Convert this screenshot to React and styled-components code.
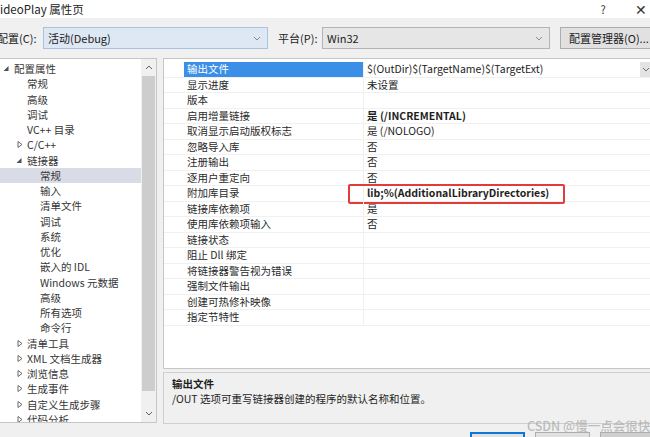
import styled, { createGlobalStyle } from "styled-components";

const GlobalStyle = createGlobalStyle`
  html, body {
    margin: 0;
    padding: 0;
    background: #f0f0f0;
    overflow: hidden;
  }
  body {
    font-family: "Noto Sans CJK SC", "Noto Sans", sans-serif;
    font-size: 10.5px;
    color: #1e1e1e;
  }
`;

const Window = styled.div`
  position: relative;
  width: 660px;
  height: 437px;
  overflow: hidden;
  display: flex;
  flex-direction: column;
  background: #f0f0f0;
`;

const TitleBar = styled.div`
  height: 18px;
  flex-shrink: 0;
  background: #fff;
  display: flex;
  align-items: center;
  font-size: 11.5px;
  color: #222;
`;

const Title = styled.span`
  flex: 1;
`;

const TitleButton = styled.span`
  width: 38px;
  text-align: center;
  font-size: ${p => (p.$big ? "14px" : "11px")};
  color: #333;
`;

const ConfigRow = styled.div`
  height: 40px;
  flex-shrink: 0;
  display: flex;
  align-items: center;
  font-size: 11px;
  color: #222;
`;

const Label = styled.span`
  width: ${p => p.$w}px;
  margin-left: ${p => p.$ml}px;
  flex-shrink: 0;
`;

const Select = styled.div`
  box-sizing: border-box;
  width: ${p => p.$w}px;
  height: 22px;
  flex-shrink: 0;
  display: flex;
  align-items: center;
  justify-content: space-between;
  padding: 0 6px 0 4px;
  background: ${p => (p.$focused ? "#dde8f4" : "#e6e6e6")};
  border: 1px solid ${p => (p.$focused ? "#a9c3de" : "#b4b4b4")};
`;

const Button = styled.div`
  box-sizing: border-box;
  width: 100px;
  height: 22px;
  flex-shrink: 0;
  margin-left: 10px;
  display: flex;
  align-items: center;
  padding-left: 8px;
  background: #e1e1e1;
  border: 1px solid #adadad;
`;

const Main = styled.div`
  height: 366px;
  flex-shrink: 0;
  display: flex;
  gap: 6px;
  padding-right: 8px;
`;

const Tree = styled.div`
  box-sizing: border-box;
  width: 158px;
  height: 365px;
  margin-left: -1px;
  display: flex;
  background: #fff;
  border: 1px solid #c6c6c6;
`;

const TreeList = styled.div`
  flex: 1;
  padding-top: 2px;
  overflow: hidden;
  color: #363636;
`;

const TreeRow = styled.div`
  height: 15.25px;
  line-height: 15.25px;
  display: flex;
  align-items: center;
  padding-left: ${p => p.$level * 13 + 1}px;
  background: ${p => (p.$selected ? "#d9dce6" : "transparent")};
  white-space: nowrap;
`;

const ArrowBox = styled.svg`
  width: 13px;
  height: 15px;
  flex-shrink: 0;
`;

const Scrollbar = styled.div`
  width: 15px;
  display: flex;
  flex-direction: column;
  background: #f0f0f0;
`;

const ScrollArrow = styled.div`
  height: 17px;
  display: flex;
  align-items: center;
  justify-content: center;
`;

const ScrollThumb = styled.div`
  height: 315px;
  margin: 0 1px;
  background: #cdcdcd;
`;

const ScrollTrack = styled.div`
  flex: 1;
  display: flex;
  flex-direction: column;
  justify-content: space-between;
`;

const RightColumn = styled.div`
  flex: 1;
  display: flex;
  flex-direction: column;
  gap: 3px;
`;

const Grid = styled.div`
  box-sizing: border-box;
  height: 311px;
  padding-top: 3px;
  background: #fff;
  border: 1px solid #c6c6c6;
`;

const GridRow = styled.div`
  box-sizing: border-box;
  height: 15.5px;
  display: grid;
  grid-template-columns: 20px 179px 1fr;
  border-bottom: 1px solid #f0f0f0;
  line-height: 14.5px;
`;

const NameCell = styled.div`
  padding-left: 3px;
  white-space: nowrap;
  background: ${p => (p.$selected ? "#3b8fe6" : "transparent")};
  color: ${p => (p.$selected ? "#fff" : "#2a2a2a")};
`;

const ValueCell = styled.div`
  position: relative;
  display: flex;
  padding-left: 3px;
  border-left: 1px solid #f0f0f0;
  white-space: nowrap;
  font-weight: ${p => (p.$bold ? 700 : 400)};
  color: #1e1e1e;
`;

const ValueText = styled.span`
  flex: 1;
`;

const DropButton = styled.div`
  width: 11px;
  display: flex;
  align-items: center;
  justify-content: center;
  background: #e3e3e3;
`;

const Highlight = styled.div`
  position: absolute;
  box-sizing: border-box;
  left: -16px;
  top: -2px;
  width: 217px;
  height: 20px;
  border: 2px solid #e23b3b;
  border-radius: 2px;
`;

const Description = styled.div`
  box-sizing: border-box;
  height: 52px;
  padding: 3px 8px;
  line-height: 15px;
  background: #f0f0f0;
  border: 1px solid #cfcfcf;
  color: #1e1e1e;
`;

const DescTitle = styled.div`
  font-weight: 700;
`;

const Footer = styled.div`
  display: flex;
  justify-content: flex-end;
  gap: 10px;
  padding-top: 8px;
`;

const FooterButton = styled.div`
  box-sizing: border-box;
  width: ${p => p.$w}px;
  height: 22px;
  background: ${p => (p.$dark ? "#cfcfcf" : "#e1e1e1")};
  border: ${p => (p.$primary ? "2px solid #0a78d4" : "1px solid #adadad")};
`;

const Watermark = styled.div`
  position: absolute;
  left: 527px;
  top: 416px;
  font-size: 12.5px;
  font-weight: 500;
  color: rgba(170, 170, 170, 0.75);
  white-space: nowrap;
`;

function Chevron({ up, color = "#8a8a8a" }) {
  return (
    <svg width="8" height="5" viewBox="0 0 8 5">
      <path
        d={up ? "M1 4 L4 1 L7 4" : "M1 1 L4 4 L7 1"}
        fill="none"
        stroke={color}
        strokeWidth="1"
      />
    </svg>
  );
}

function Arrow({ expanded }) {
  return (
    <ArrowBox viewBox="0 0 13 15">
      {expanded ? (
        <polygon points="7.5,5 7.5,10 2.5,10" fill="#505050" />
      ) : (
        <polygon points="4,4.5 8,7.5 4,10.5" fill="none" stroke="#6a6a6a" strokeWidth="1" />
      )}
    </ArrowBox>
  );
}

const treeItems = [
  { text: "配置属性", level: 0, arrow: "open" },
  { text: "常规", level: 1 },
  { text: "高级", level: 1 },
  { text: "调试", level: 1 },
  { text: "VC++ 目录", level: 1 },
  { text: "C/C++", level: 0, arrow: "closed", sub: true },
  { text: "链接器", level: 0, arrow: "open", sub: true },
  { text: "常规", level: 2, selected: true },
  { text: "输入", level: 2 },
  { text: "清单文件", level: 2 },
  { text: "调试", level: 2 },
  { text: "系统", level: 2 },
  { text: "优化", level: 2 },
  { text: "嵌入的 IDL", level: 2 },
  { text: "Windows 元数据", level: 2 },
  { text: "高级", level: 2 },
  { text: "所有选项", level: 2 },
  { text: "命令行", level: 2 },
  { text: "清单工具", level: 0, arrow: "closed", sub: true },
  { text: "XML 文档生成器", level: 0, arrow: "closed", sub: true },
  { text: "浏览信息", level: 0, arrow: "closed", sub: true },
  { text: "生成事件", level: 0, arrow: "closed", sub: true },
  { text: "自定义生成步骤", level: 0, arrow: "closed", sub: true },
  { text: "代码分析", level: 0, arrow: "closed", sub: true },
];

const props = [
  { name: "输出文件", value: "$(OutDir)$(TargetName)$(TargetExt)", selected: true },
  { name: "显示进度", value: "未设置" },
  { name: "版本", value: "" },
  { name: "启用增量链接", value: "是 (/INCREMENTAL)", bold: true },
  { name: "取消显示启动版权标志", value: "是 (/NOLOGO)" },
  { name: "忽略导入库", value: "否" },
  { name: "注册输出", value: "否" },
  { name: "逐用户重定向", value: "否" },
  { name: "附加库目录", value: "lib;%(AdditionalLibraryDirectories)", bold: true, marked: true },
  { name: "链接库依赖项", value: "是" },
  { name: "使用库依赖项输入", value: "否" },
  { name: "链接状态", value: "" },
  { name: "阻止 Dll 绑定", value: "" },
  { name: "将链接器警告视为错误", value: "" },
  { name: "强制文件输出", value: "" },
  { name: "创建可热修补映像", value: "" },
  { name: "指定节特性", value: "" },
];

export default function App() {
  return (
    <>
      <GlobalStyle />
      <Window>
        <TitleBar>
          <Title>ideoPlay 属性页</Title>
          <TitleButton>?</TitleButton>
          <TitleButton $big>✕</TitleButton>
        </TitleBar>

        <ConfigRow>
          <Label $w={46} $ml={-3}>配置(C):</Label>
          <Select $w={225} $focused>
            <span>活动(Debug)</span>
            <Chevron />
          </Select>
          <Label $w={44} $ml={10}>平台(P):</Label>
          <Select $w={228}>
            <span>Win32</span>
            <Chevron />
          </Select>
          <Button>配置管理器(O)...</Button>
        </ConfigRow>

        <Main>
          <Tree>
            <TreeList>
              {treeItems.map((item, i) => (
                <TreeRow
                  key={i}
                  $level={item.sub ? 1 : item.arrow ? 0 : item.level}
                  $selected={item.selected}
                >
                  {item.arrow ? <Arrow expanded={item.arrow === "open"} /> : <ArrowBox />}
                  <span>{item.text}</span>
                </TreeRow>
              ))}
            </TreeList>
            <Scrollbar>
              <ScrollArrow>
                <Chevron up color="#606060" />
              </ScrollArrow>
              <ScrollTrack>
                <ScrollThumb />
                <ScrollArrow>
                  <Chevron color="#606060" />
                </ScrollArrow>
              </ScrollTrack>
            </Scrollbar>
          </Tree>

          <RightColumn>
            <Grid>
              {props.map((p, i) => (
                <GridRow key={i}>
                  <div />
                  <NameCell $selected={p.selected}>{p.name}</NameCell>
                  <ValueCell $bold={p.bold}>
                    <ValueText>{p.value}</ValueText>
                    {p.selected && (
                      <DropButton>
                        <Chevron color="#707070" />
                      </DropButton>
                    )}
                    {p.marked && <Highlight />}
                  </ValueCell>
                </GridRow>
              ))}
            </Grid>
            <Description>
              <DescTitle>输出文件</DescTitle>
              <div>/OUT 选项可重写链接器创建的程序的默认名称和位置。</div>
            </Description>
          </RightColumn>
        </Main>

        <Footer>
          <FooterButton $w={55} $primary />
          <FooterButton $w={55} />
          <FooterButton $w={60} $dark />
        </Footer>

        <Watermark>CSDN @慢一点会很快</Watermark>
      </Window>
    </>
  );
}
